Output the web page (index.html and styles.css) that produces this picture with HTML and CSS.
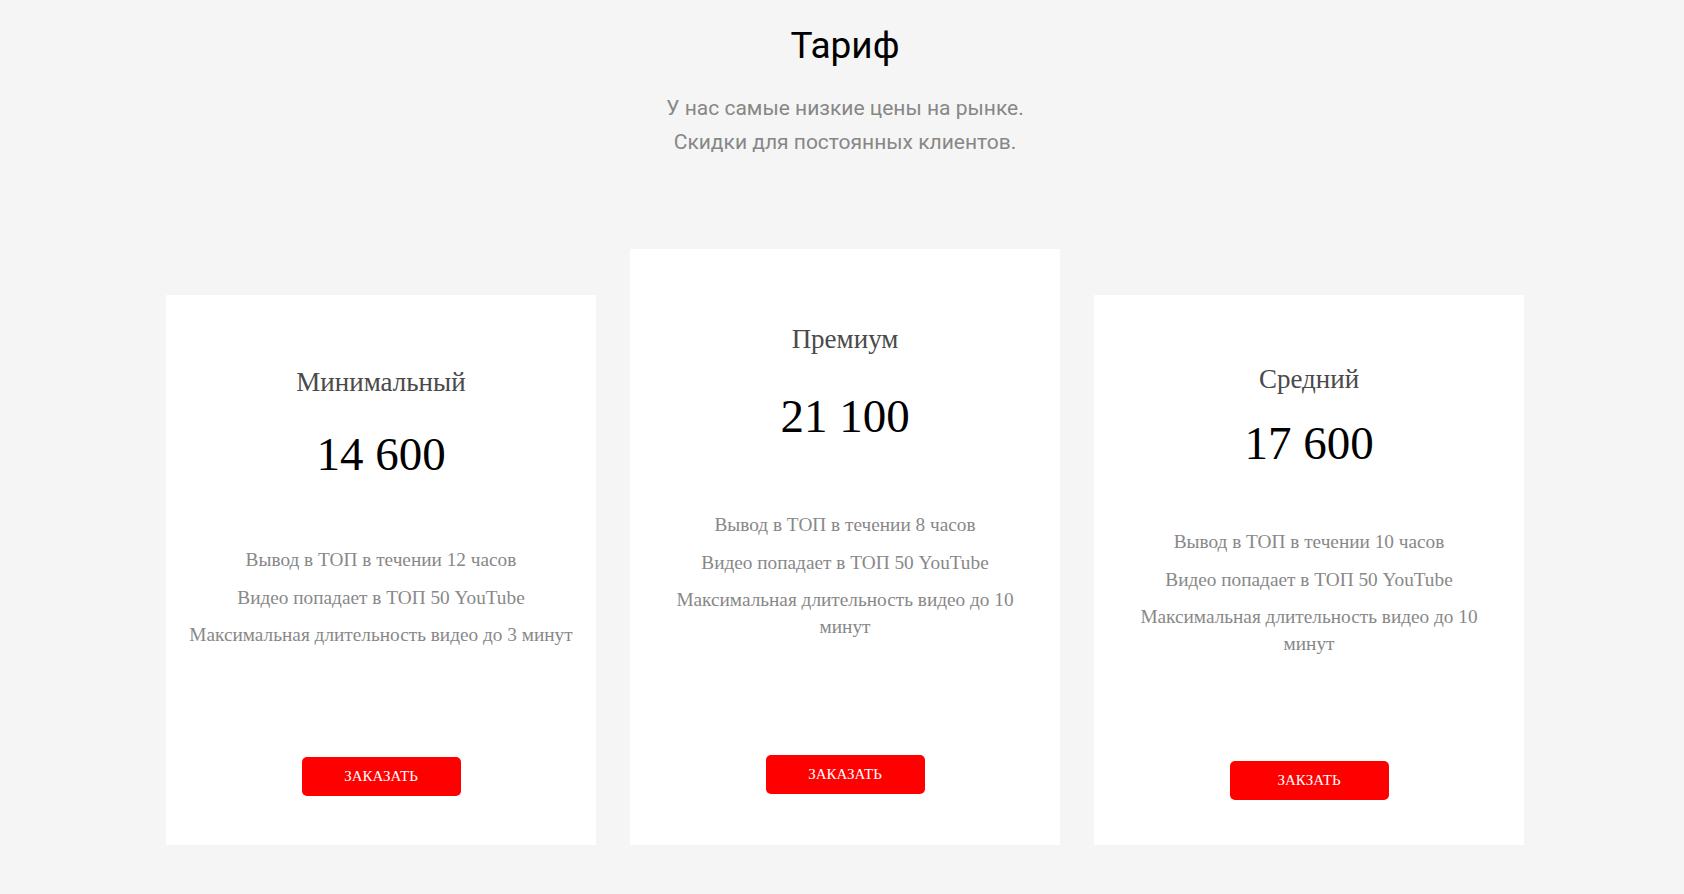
FILE: index.html
```html
<!DOCTYPE html>
<html lang="ru">
<head>
<meta charset="utf-8">
<title>Тариф</title>
<link rel="stylesheet" href="styles.css">
</head>
<body>
<div class="page">
  <header class="intro">
    <h1 class="intro__title">Тариф</h1>
    <p class="intro__text">У нас самые низкие цены на рынке.<br>Скидки для постоянных клиентов.</p>
  </header>
  <section class="plans">
    <article class="plan plan--min">
      <h2 class="plan__name">Минимальный</h2>
      <div class="plan__price">14 600</div>
      <ul class="plan__features">
        <li>Вывод в ТОП в течении 12 часов</li>
        <li>Видео попадает в ТОП 50 YouTube</li>
        <li>Максимальная длительность видео до 3 минут</li>
      </ul>
      <a class="plan__btn" href="#">ЗАКАЗАТЬ</a>
    </article>
    <article class="plan plan--premium">
      <h2 class="plan__name">Премиум</h2>
      <div class="plan__price">21 100</div>
      <ul class="plan__features">
        <li>Вывод в ТОП в течении 8 часов</li>
        <li>Видео попадает в ТОП 50 YouTube</li>
        <li>Максимальная длительность видео до 10 минут</li>
      </ul>
      <a class="plan__btn" href="#">ЗАКАЗАТЬ</a>
    </article>
    <article class="plan plan--mid">
      <h2 class="plan__name">Средний</h2>
      <div class="plan__price">17 600</div>
      <ul class="plan__features">
        <li>Вывод в ТОП в течении 10 часов</li>
        <li>Видео попадает в ТОП 50 YouTube</li>
        <li>Максимальная длительность видео до 10 минут</li>
      </ul>
      <a class="plan__btn" href="#">ЗАКЗАТЬ</a>
    </article>
  </section>
</div>
</body>
</html>
```

FILE: styles.css
```css
html, body {
  margin: 0;
  padding: 0;
  background: #f5f5f5;
}

.page {
  padding-left: 6px;
  min-height: 894px;
  box-sizing: border-box;
}

.intro {
  text-align: center;
  padding-top: 22px;
  font-family: Roboto, "Noto Sans", sans-serif;
}

.intro__title {
  margin: 0;
  font-size: 37px;
  line-height: 48px;
  font-weight: 400;
  color: #000;
}

.intro__text {
  margin: 22px 0 0;
  font-size: 21px;
  line-height: 33.5px;
  color: #878787;
}

.plans {
  display: flex;
  justify-content: center;
  align-items: flex-end;
  gap: 34px;
  margin-top: 90px;
}

.plan {
  width: 430px;
  box-sizing: border-box;
  background: #fff;
  display: flex;
  flex-direction: column;
  align-items: center;
  text-align: center;
  font-family: "Liberation Serif", "Times New Roman", serif;
}

.plan--min { height: 550px; padding-top: 71px; }
.plan--premium { height: 596px; padding-top: 74px; }
.plan--mid { height: 550px; padding-top: 68px; }

.plan__name {
  margin: 0;
  font-size: 27px;
  line-height: 32px;
  font-weight: 400;
  color: #4a4a4a;
}

.plan__price {
  font-size: 47px;
  line-height: 56px;
  color: #000;
}

.plan--min .plan__price { margin-top: 28px; }
.plan--premium .plan__price { margin-top: 33px; }
.plan--mid .plan__price { margin-top: 20px; }

.plan__features {
  list-style: none;
  padding: 0;
  margin: 0;
  max-width: 386px;
  font-size: 19.3px;
  line-height: 27px;
  color: #888;
}

.plan--min .plan__features { margin-top: 64px; }
.plan--premium .plan__features { margin-top: 67px; }
.plan--mid .plan__features { margin-top: 57px; }

.plan__features li + li {
  margin-top: 10.5px;
}

.plan__btn {
  margin-top: auto;
  width: 159px;
  height: 39px;
  box-sizing: border-box;
  border-radius: 5px;
  background: #ff0000;
  color: #fff;
  text-decoration: none;
  font-size: 15px;
  line-height: 39px;
}

.plan--min .plan__btn { margin-bottom: 49px; }
.plan--premium .plan__btn { margin-bottom: 51px; }
.plan--mid .plan__btn { margin-bottom: 45px; }
```
